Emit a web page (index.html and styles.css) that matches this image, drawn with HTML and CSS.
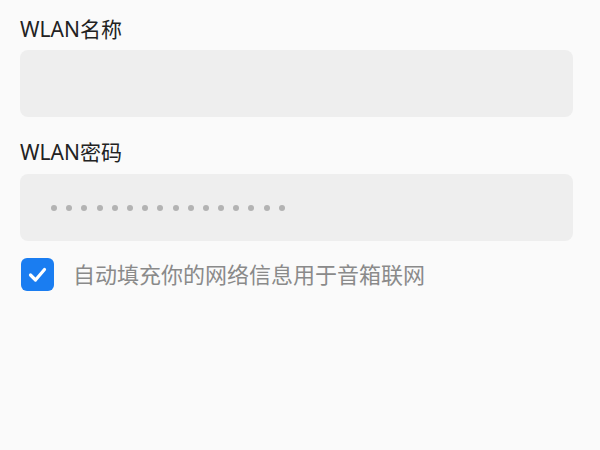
FILE: index.html
```html
<!DOCTYPE html>
<html lang="zh">
<head>
<meta charset="utf-8">
<link rel="stylesheet" href="styles.css">
</head>
<body>
<div class="page">
  <div class="label first">WLAN名称</div>
  <div class="field"></div>
  <div class="label second">WLAN密码</div>
  <div class="field pwd">
    <div class="dots">
      <span></span><span></span><span></span><span></span>
      <span></span><span></span><span></span><span></span>
      <span></span><span></span><span></span><span></span>
      <span></span><span></span><span></span><span></span>
    </div>
  </div>
  <div class="check-row">
    <div class="checkbox">
      <svg width="33" height="33" viewBox="0 0 33 33">
        <path d="M9.5 17 L14.5 22 L23.5 11.5" fill="none" stroke="#fff" stroke-width="3.2" stroke-linecap="round" stroke-linejoin="round"/>
      </svg>
    </div>
    <div class="check-text">自动填充你的网络信息用于音箱联网</div>
  </div>
</div>
</body>
</html>
```
FILE: styles.css
```css
html, body {
  margin: 0;
  padding: 0;
  background: #fafafa;
}
body {
  width: 600px;
  height: 450px;
  overflow: hidden;
  font-family: "Noto Sans", "Noto Sans CJK SC", sans-serif;
}
.page {
  padding: 0 27px 0 20px;
  display: flex;
  flex-direction: column;
}
.label {
  font-size: 21px;
  line-height: 30px;
  color: #222;
  margin-bottom: 6px;
}
.label.first {
  margin-top: 14px;
}
.label.second {
  margin-top: 20px;
  margin-bottom: 7px;
}
.field {
  height: 67px;
  background: #eeeeee;
  border-radius: 8px;
  display: flex;
  align-items: center;
}
.dots {
  display: flex;
  gap: 9.2px;
  padding-left: 31px;
}
.dots span {
  width: 6px;
  height: 6px;
  border-radius: 50%;
  background: #b3b3b3;
}
.check-row {
  margin-top: 17px;
  display: flex;
  align-items: center;
  gap: 19px;
}
.checkbox {
  width: 33px;
  height: 33px;
  border-radius: 6px;
  background: #1a7df1;
  margin-left: 1px;
  display: flex;
}
.check-text {
  font-size: 22px;
  line-height: 33px;
  color: #8a8a8a;
}
```
